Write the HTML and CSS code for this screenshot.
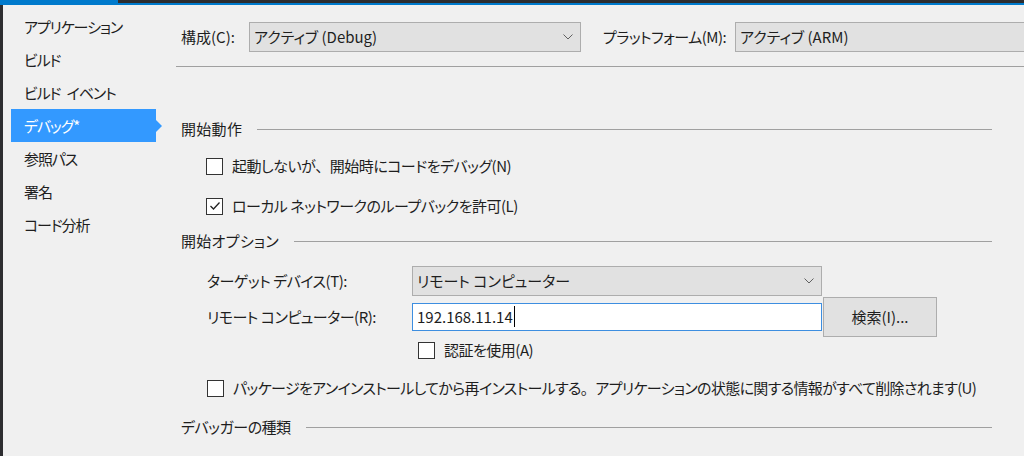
FILE: index.html
```html
<!DOCTYPE html>
<html lang="ja">
<head>
    <meta charset="UTF-8">
    <title>デバッグ</title>
    <link rel="stylesheet" href="styles.css">
</head>
<body>
    <div class="tabstrip">
        <div class="tab"></div>
    </div>
    <div class="tabline"></div>
    <div class="window">
        <ul class="sidebar">
            <li>アプリケーション</li>
            <li>ビルド</li>
            <li>ビルド イベント</li>
            <li class="active">デバッグ*</li>
            <li>参照パス</li>
            <li>署名</li>
            <li>コード分析</li>
        </ul>
        <div class="content">
            <div class="toprow">
                <span class="label">構成(C):</span>
                <div class="combo config">
                    <span>アクティブ (Debug)</span>
                    <svg class="chev" width="10" height="6" viewBox="0 0 10 6"><polyline points="0.5,0.5 5,5 9.5,0.5" fill="none" stroke="#606060" stroke-width="1"/></svg>
                </div>
                <span class="label platform-label">プラットフォーム(M):</span>
                <div class="combo platform">
                    <span>アクティブ (ARM)</span>
                </div>
            </div>
            <div class="rule"></div>

            <div class="section first">
                <span>開始動作</span>
                <div class="line"></div>
            </div>
            <div class="check row1">
                <div class="box"></div>
                <span>起動しないが<span class="punct">、</span>開始時にコードをデバッグ(N)</span>
            </div>
            <div class="check row2">
                <div class="box">
                    <svg width="14" height="14" viewBox="0 0 14 14"><polyline points="2.5,7 5.5,10 11.5,3.5" fill="none" stroke="#222" stroke-width="1.3"/></svg>
                </div>
                <span>ローカル ネットワークのループバックを許可(L)</span>
            </div>

            <div class="section second">
                <span>開始オプション</span>
                <div class="line"></div>
            </div>
            <div class="field target">
                <span class="flabel">ターゲット デバイス(T):</span>
                <div class="combo device">
                    <span>リモート コンピューター</span>
                    <svg class="chev" width="10" height="6" viewBox="0 0 10 6"><polyline points="0.5,0.5 5,5 9.5,0.5" fill="none" stroke="#606060" stroke-width="1"/></svg>
                </div>
            </div>
            <div class="field remote">
                <span class="flabel">リモート コンピューター(R):</span>
                <div class="textbox"><span class="caret">192.168.11.14</span></div>
                <div class="btn">検索(I)...</div>
            </div>
            <div class="check auth">
                <div class="box"></div>
                <span>認証を使用(A)</span>
            </div>
            <div class="check package">
                <div class="box"></div>
                <span class="long">パッケージをアンインストールしてから再インストールする<span class="punct">。</span>アプリケーションの状態に関する情報がすべて削除されます(U)</span>
            </div>

            <div class="section third">
                <span>デバッガーの種類</span>
                <div class="line"></div>
            </div>
        </div>
    </div>
</body>
</html>
```

FILE: styles.css
```css
*{
    margin: 0;
    padding: 0;
    box-sizing: border-box;
}
body{
    width: 1024px;
    height: 456px;
    overflow: hidden;
    background: #f0f0f0;
    color: #1e1e1e;
    font-family: "Noto Sans CJK JP", "Noto Sans", sans-serif;
    font-size: 15px;
    font-feature-settings: "palt";
    line-height: 20px;
    white-space: nowrap;
}
.punct{
    font-feature-settings: normal;
}
.tabstrip{
    height: 3px;
    background: #2d2d30;
}
.tabstrip .tab{
    width: 118px;
    height: 3px;
    background: #007acc;
}
.tabline{
    height: 2px;
    background: #007acc;
}
.window{
    display: flex;
    height: 451px;
    border-left: 3px solid #2d2d30;
}

/* left menu */
.sidebar{
    list-style: none;
    width: 173px;
    padding: 5px 0 0 8px;
}
.sidebar li{
    position: relative;
    width: 145px;
    height: 33px;
    line-height: 33px;
    padding-left: 13px;
    letter-spacing: -1.1px;
    word-spacing: 4px;
}
.sidebar li.active{
    background: #3399ff;
    color: #fff;
}
.sidebar li.active::after{
    content: "";
    position: absolute;
    right: -6px;
    top: 11px;
    border-top: 6px solid transparent;
    border-bottom: 6px solid transparent;
    border-left: 6px solid #3399ff;
}

/* right side */
.content{
    flex: 1;
    padding-top: 17px;
}
.toprow{
    display: flex;
    align-items: center;
    height: 30px;
    padding-left: 5px;
}
.toprow .label{
    width: 68px;
}
.toprow .platform-label{
    margin-left: 22px;
    width: 132px;
    letter-spacing: -0.5px;
}
.combo{
    position: relative;
    display: flex;
    align-items: center;
    height: 30px;
    padding-left: 4px;
    background: #e1e1e1;
    border: 1px solid #adadad;
}
.combo .chev{
    position: absolute;
    right: 7px;
    top: 11px;
}
.config{
    width: 332px;
}
.platform{
    flex: 1;
    border-right: none;
}
.rule{
    height: 1px;
    margin-top: 14px;
    background: #a0a0a0;
}

.section{
    display: flex;
    align-items: center;
    height: 20px;
    padding-left: 5px;
    width: 816px;
}
.section span{
    letter-spacing: 0.3px;
}
.section .line{
    flex: 1;
    height: 1px;
    margin-left: 15px;
    background: #a0a0a0;
}
.section.first{
    margin-top: 52px;
}
.section.second{
    margin-top: 15px;
}
.section.third{
    margin-top: 19px;
}
.section.third span{
    letter-spacing: -0.5px;
}

.check{
    display: flex;
    align-items: center;
    height: 20px;
    gap: 9px;
}
.check span{
    letter-spacing: -0.5px;
}
.check span.long{
    letter-spacing: -0.65px;
}
.check .box{
    width: 17px;
    height: 17px;
    background: #fff;
    border: 1px solid #333;
    display: flex;
    align-items: center;
    justify-content: center;
}
.row1{
    margin-top: 17px;
    padding-left: 30px;
}
.row2{
    margin-top: 20px;
    padding-left: 30px;
}
.auth{
    margin-top: 3px;
    padding-left: 242px;
}
.package{
    margin-top: 18px;
    padding-left: 31px;
}

.field{
    display: flex;
    align-items: center;
    padding-left: 31px;
}
.field .flabel{
    width: 205px;
    letter-spacing: -0.5px;
}
.target{
    margin-top: 15px;
}
.device{
    width: 410px;
}
.remote{
    margin-top: 1px;
    height: 40px;
}
.textbox{
    width: 410px;
    height: 28px;
    padding-left: 4px;
    line-height: 26px;
    background: #fff;
    border: 1px solid #3d8ee0;
    font-feature-settings: normal;
}
.caret{
    padding-right: 1px;
    border-right: 1px solid #000;
}
.btn{
    width: 114px;
    height: 40px;
    margin-left: 1px;
    line-height: 38px;
    text-align: center;
    background: #e1e1e1;
    border: 1px solid #adadad;
}
```
